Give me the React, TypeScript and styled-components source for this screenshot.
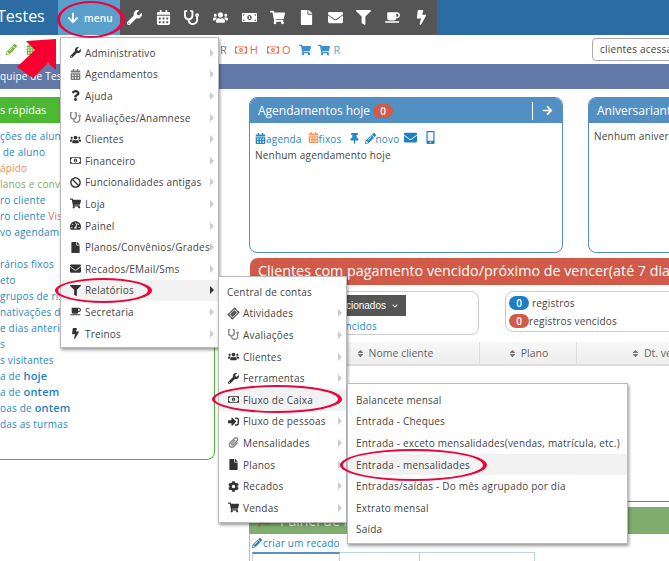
import React from 'react';
import styled, { createGlobalStyle } from 'styled-components';
import {
    FaArrowDown,
    FaArrowRight,
    FaBan,
    FaBolt,
    FaCalendarAlt,
    FaChevronDown,
    FaCoffee,
    FaCog,
    FaEnvelope,
    FaFile,
    FaFilter,
    FaFlag,
    FaMobileAlt,
    FaMoneyBillAlt,
    FaPaperclip,
    FaPencilAlt,
    FaQuestion,
    FaRegMoneyBillAlt,
    FaShoppingCart,
    FaSignInAlt,
    FaSort,
    FaStethoscope,
    FaTachometerAlt,
    FaThumbtack,
    FaTicketAlt,
    FaUsers,
    FaWrench,
} from 'react-icons/fa';

const GlobalStyle = createGlobalStyle`
    html, body {
        margin: 0;
        padding: 0;
        background: #fff;
    }
    * {
        box-sizing: border-box;
    }
`;

const Page = styled.div`
    position: relative;
    width: 669px;
    height: 561px;
    overflow: hidden;
    background: #fff;
    font-family: 'Open Sans', 'Liberation Sans', sans-serif;
    font-size: 10px;
    letter-spacing: 0.2px;
    color: #444;
`;

const Header = styled.header`
    display: flex;
    align-items: stretch;
    height: 35px;
    background: #2d6ca2;
`;

const Brand = styled.div`
    width: 60px;
    margin-left: -3px;
    flex: none;
    font-size: 16px;
    line-height: 32px;
    letter-spacing: 0;
    color: #fff;
    white-space: nowrap;
`;

const MenuButton = styled.div`
    display: flex;
    align-items: center;
    gap: 5px;
    width: 62px;
    margin-left: 1px;
    padding-left: 9px;
    background: #5b9fcd;
    color: #fff;
    font-size: 10px;
    font-weight: 600;
    svg {
        font-size: 12px;
    }
`;

const Toolbar = styled.div`
    display: flex;
    width: 317px;
    background: #555;
    color: #fff;
`;

const ToolbarCell = styled.span`
    display: flex;
    align-items: center;
    justify-content: center;
    width: 28.7px;
    font-size: 15px;
`;

const SubBar = styled.div`
    display: flex;
    align-items: center;
    height: 29px;
`;

const SubIcons = styled.div`
    display: flex;
    align-items: center;
    gap: 9px;
    padding-left: 6px;
    width: 220px;
    font-size: 11px;
`;

const ColorIcon = styled.span<{ $color: string }>`
    display: inline-flex;
    align-items: center;
    gap: 3px;
    color: ${(p) => p.$color};
`;

const ShortcutRow = styled.div`
    display: flex;
    align-items: center;
    font-size: 11px;
    letter-spacing: 0;
`;

const Shortcut = styled(ColorIcon)<{ $space: number }>`
    margin-right: ${(p) => p.$space}px;
    svg {
        font-size: 12px;
    }
`;

const SearchInput = styled.div`
    margin-left: auto;
    width: 100px;
    height: 23px;
    margin-right: -23px;
    border: 1px solid #aaa;
    border-radius: 4px;
    padding-left: 7px;
    line-height: 21px;
    white-space: nowrap;
    color: #444;
`;

const Banner = styled.div`
    height: 25px;
    background: #6379a8;
    color: #fff;
    line-height: 25px;
    white-space: nowrap;
`;

const Main = styled.main`
    display: flex;
    gap: 34px;
    padding-top: 8px;
`;

const Sidebar = styled.aside`
    width: 215px;
    height: 363px;
    flex: none;
    border: 1px solid #4cb833;
    border-left: 0;
    border-radius: 0 0 8px 0;
`;

const SidebarTitle = styled.div`
    height: 26px;
    margin-top: -1px;
    background: #4cb833;
    color: #fff;
    font-size: 11px;
    font-weight: 500;
    line-height: 25px;
    letter-spacing: 0;
`;

const SidebarList = styled.div`
    display: flex;
    flex-direction: column;
    padding-top: 5px;
`;

const SidebarLink = styled.div<{ $color?: string }>`
    height: 16px;
    line-height: 16px;
    white-space: nowrap;
    color: ${(p) => p.$color || '#2a86c4'};
    b {
        font-weight: 600;
        font-size: 11px;
        color: #1d7fc4;
    }
`;

const Accent = styled.span<{ $color: string }>`
    color: ${(p) => p.$color};
`;

const Content = styled.section`
    display: flex;
    flex-direction: column;
    width: 640px;
    flex: none;
`;

const Panels = styled.div`
    display: flex;
    gap: 25px;
`;

const Panel = styled.div`
    width: 314px;
    height: 156px;
    flex: none;
    border: 1px solid #528fc2;
    border-radius: 8px;
    overflow: hidden;
`;

const PanelHeader = styled.div`
    display: flex;
    align-items: center;
    height: 25px;
    padding-left: 8px;
    background: #528fc2;
    color: #fff;
    font-size: 12px;
    letter-spacing: 0;
    white-space: nowrap;
`;

const CountBadge = styled.span<{ $color: string }>`
    display: inline-flex;
    align-items: center;
    justify-content: center;
    width: 20px;
    height: 14px;
    border-radius: 8px;
    background: ${(p) => p.$color};
    color: #fff;
    font-size: 10px;
    font-weight: 600;
    letter-spacing: 0;
`;

const PanelAction = styled.span`
    display: flex;
    align-items: center;
    justify-content: center;
    margin-left: auto;
    width: 30px;
    height: 18px;
    border-left: 1px solid #fff;
    font-size: 11px;
`;

const PanelBody = styled.div<{ $top: number }>`
    padding: ${(p) => p.$top}px 5px 0;
`;

const LinkRow = styled.div`
    display: flex;
    align-items: center;
    height: 17px;
    color: #2a86c4;
`;

const LinkIcon = styled(ColorIcon)<{ $space: number }>`
    gap: 0;
    margin-right: ${(p) => p.$space}px;
    svg {
        font-size: 11px;
    }
`;

const ContactIcon = styled(LinkIcon)`
    margin-bottom: 3px;
    svg {
        font-size: 13px;
    }
`;

const EmptyText = styled.div`
    line-height: 17px;
    white-space: nowrap;
    color: #444;
`;

const DueTitle = styled.div`
    height: 27px;
    margin-top: 5px;
    margin-left: 1px;
    padding-left: 8px;
    border-radius: 8px 8px 0 0;
    background: #d25a48;
    color: #fff;
    font-size: 14.3px;
    line-height: 26px;
    letter-spacing: 0;
    white-space: nowrap;
`;

const FilterRow = styled.div`
    display: flex;
    gap: 26px;
    padding-top: 6px;
    margin-left: 1px;
`;

const SelectionBox = styled.div`
    display: flex;
    flex-direction: column;
    align-items: flex-end;
    width: 229px;
    height: 44px;
    flex: none;
    padding: 3px 72px 0 0;
    border: 1px solid #ccc;
    border-radius: 8px;
`;

const SelectionButton = styled.div`
    display: flex;
    align-items: center;
    gap: 6px;
    height: 21px;
    padding: 0 8px 0 6px;
    background: #555;
    color: #fff;
    font-family: 'Liberation Sans', sans-serif;
    font-size: 10px;
    letter-spacing: 0;
    svg {
        font-size: 6px;
    }
`;

const SelectionLink = styled.div`
    margin: 3px 29px 0 0;
    color: #1d8ad6;
`;

const CountBox = styled.div`
    display: flex;
    flex-direction: column;
    gap: 4px;
    width: 300px;
    height: 41px;
    flex: none;
    padding: 4px 3px 0;
    border: 1px solid #ccc;
    border-radius: 8px;
`;

const CountRow = styled.div<{ $gap: number }>`
    display: flex;
    align-items: center;
    gap: ${(p) => p.$gap}px;
    height: 14px;
    white-space: nowrap;
`;

const TableHead = styled.div`
    display: flex;
    height: 24px;
    margin-top: 7px;
    margin-left: 1px;
    background: linear-gradient(#f7f7f7, #eee);
    border-bottom: 2px solid #ddd;
    color: #666;
    font-size: 10.5px;
    font-weight: 500;
    letter-spacing: 0;
`;

const TableCell = styled.div<{ $width: number }>`
    display: flex;
    align-items: center;
    justify-content: center;
    gap: 4px;
    width: ${(p) => p.$width}px;
    flex: none;
    border-right: 1px solid #ddd;
    white-space: nowrap;
    svg {
        font-size: 9px;
        color: #777;
    }
`;

const TableBody = styled.div`
    height: 136px;
    margin-left: 1px;
    border-bottom: 1px solid #d25a48;
`;

const BoardTitle = styled.div`
    display: flex;
    align-items: center;
    gap: 10px;
    height: 27px;
    margin-top: 5px;
    padding-left: 9px;
    background: #7fae6e;
    color: #fff;
    font-size: 14px;
    letter-spacing: 0;
    white-space: nowrap;
    svg {
        font-size: 12px;
        color: #d25a48;
    }
`;

const Board = styled.div`
    padding-left: 2px;
    border-left: 1px solid #a5c998;
`;

const BoardLink = styled.div`
    display: flex;
    align-items: center;
    gap: 1px;
    height: 18px;
    color: #1d7fc4;
    svg {
        font-size: 10px;
    }
`;

const Tabs = styled.div`
    display: flex;
`;

const Tab = styled.div<{ $width: number; $active?: boolean }>`
    width: ${(p) => p.$width}px;
    height: 40px;
    padding: 7px 0 0 ${(p) => (p.$active ? 13 : 10)}px;
    border: 1px solid #bcd0e0;
    border-left: ${(p) => (p.$active ? '1px solid #bcd0e0' : '0')};
    border-top: ${(p) => (p.$active ? '2px solid #5a8fc0' : '1px solid #bcd0e0')};
    font-size: 11px;
`;

const Flyout = styled.nav<{ $left: number; $top: number; $width: number; $pad?: number }>`
    position: absolute;
    left: ${(p) => p.$left}px;
    top: ${(p) => p.$top}px;
    width: ${(p) => p.$width}px;
    padding: ${(p) => p.$pad ?? 4}px 0 3px;
    background: #fff;
    border: 1px solid #bbb;
    box-shadow: 1px 2px 3px rgba(0, 0, 0, 0.4);
`;

const FlyoutItem = styled.div<{ $active?: boolean }>`
    display: flex;
    align-items: center;
    height: 21.6px;
    padding: 0 4px 0 8px;
    background: ${(p) => (p.$active ? '#f2f2f2' : 'transparent')};
    color: #444;
    white-space: nowrap;
`;

const FlyoutIcon = styled.span<{ $color?: string }>`
    display: flex;
    align-items: center;
    justify-content: center;
    width: 13px;
    margin-right: 3px;
    flex: none;
    font-size: 11px;
    color: ${(p) => p.$color || '#333'};
`;

const FlyoutLabel = styled.span`
    flex: 1;
    min-width: 0;
`;

const Caret = styled.span<{ $active?: boolean }>`
    width: 0;
    height: 0;
    flex: none;
    border-style: solid;
    border-width: 4px 0 4px 4px;
    border-color: transparent transparent transparent ${(p) => (p.$active ? '#333' : '#ccc')};
`;

const TiltedTicket = styled(FaTicketAlt)`
    transform: rotate(-45deg);
`;

const Ring = styled.div<{ $left: number; $top: number; $width: number; $height: number }>`
    position: absolute;
    left: ${(p) => p.$left}px;
    top: ${(p) => p.$top}px;
    width: ${(p) => p.$width}px;
    height: ${(p) => p.$height}px;
    border-style: solid;
    border-color: #e8063c;
    border-width: 2px 4px 2px 3px;
    border-radius: 50%;
    pointer-events: none;
`;

const PointerArrow = styled.svg`
    position: absolute;
    left: 0;
    top: 30px;
    width: 70px;
    height: 60px;
`;

type MenuEntry = {
    label: string;
    icon?: React.ReactNode;
    color?: string;
    active?: boolean;
};

const mainMenu: MenuEntry[] = [
    { label: 'Administrativo', icon: <FaWrench /> },
    { label: 'Agendamentos', icon: <FaCalendarAlt />, color: '#777' },
    { label: 'Ajuda', icon: <FaQuestion /> },
    { label: 'Avaliações/Anamnese', icon: <FaStethoscope />, color: '#888' },
    { label: 'Clientes', icon: <FaUsers /> },
    { label: 'Financeiro', icon: <FaRegMoneyBillAlt /> },
    { label: 'Funcionalidades antigas', icon: <FaBan /> },
    { label: 'Loja', icon: <FaShoppingCart /> },
    { label: 'Painel', icon: <FaTachometerAlt /> },
    { label: 'Planos/Convênios/Grades', icon: <FaFile /> },
    { label: 'Recados/EMail/Sms', icon: <FaEnvelope /> },
    { label: 'Relatórios', icon: <FaFilter />, active: true },
    { label: 'Secretaria', icon: <FaCoffee /> },
    { label: 'Treinos', icon: <FaBolt /> },
];

const reportsMenu: MenuEntry[] = [
    { label: 'Atividades', icon: <TiltedTicket />, color: '#555' },
    { label: 'Avaliações', icon: <FaStethoscope />, color: '#888' },
    { label: 'Clientes', icon: <FaUsers /> },
    { label: 'Ferramentas', icon: <FaWrench /> },
    { label: 'Fluxo de Caixa', icon: <FaRegMoneyBillAlt />, active: true },
    { label: 'Fluxo de pessoas', icon: <FaSignInAlt /> },
    { label: 'Mensalidades', icon: <FaPaperclip />, color: '#888' },
    { label: 'Planos', icon: <FaFile /> },
    { label: 'Recados', icon: <FaCog /> },
    { label: 'Vendas', icon: <FaShoppingCart /> },
];

const cashFlowMenu = [
    'Balancete mensal',
    'Entrada - Cheques',
    'Entrada - exceto mensalidades(vendas, matrícula, etc.)',
    'Entrada - mensalidades',
    'Entradas/saídas - Do mês agrupado por dia',
    'Extrato mensal',
    'Saída',
];

const toolbarIcons = [
    <FaWrench />,
    <FaCalendarAlt />,
    <FaStethoscope />,
    <FaUsers />,
    <FaMoneyBillAlt />,
    <FaShoppingCart />,
    <FaFile />,
    <FaEnvelope />,
    <FaFilter />,
    <FaCoffee />,
    <FaBolt />,
];

const MenuRow = ({ entry }: { entry: MenuEntry }) => (
    <FlyoutItem $active={entry.active}>
        <FlyoutIcon $color={entry.color}>{entry.icon}</FlyoutIcon>
        <FlyoutLabel>{entry.label}</FlyoutLabel>
        <Caret $active={entry.active} />
    </FlyoutItem>
);

export default function App() {
    return (
        <Page>
            <GlobalStyle />
            <Header>
                <Brand>Testes</Brand>
                <MenuButton>
                    <FaArrowDown />
                    menu
                </MenuButton>
                <Toolbar>
                    {toolbarIcons.map((icon, i) => (
                        <ToolbarCell key={i}>{icon}</ToolbarCell>
                    ))}
                </Toolbar>
            </Header>

            <SubBar>
                <SubIcons>
                    <ColorIcon $color="#7cb342">
                        <FaPencilAlt />
                    </ColorIcon>
                    <ColorIcon $color="#7cb342">
                        <FaCalendarAlt />
                    </ColorIcon>
                </SubIcons>
                <ShortcutRow>
                    <Shortcut $color="#777" $space={8}>R</Shortcut>
                    <Shortcut $color="#e8664a" $space={9}>
                        <FaRegMoneyBillAlt />H
                    </Shortcut>
                    <Shortcut $color="#e8664a" $space={9}>
                        <FaRegMoneyBillAlt />O
                    </Shortcut>
                    <Shortcut $color="#3d8fd1" $space={7}>
                        <FaShoppingCart />
                    </Shortcut>
                    <Shortcut $color="#3d8fd1" $space={0}>
                        <FaShoppingCart />
                        <Accent $color="#6a9fd0">R</Accent>
                    </Shortcut>
                </ShortcutRow>
                <SearchInput>clientes acessados</SearchInput>
            </SubBar>

            <Banner>quipe de Testes</Banner>

            <Main>
                <Sidebar>
                    <SidebarTitle>s rápidas</SidebarTitle>
                    <SidebarList>
                        <SidebarLink>ções de aluno</SidebarLink>
                        <SidebarLink>&nbsp;de aluno</SidebarLink>
                        <SidebarLink $color="#f58a4f">ápido</SidebarLink>
                        <SidebarLink $color="#7fa96b">lanos e conv</SidebarLink>
                        <SidebarLink>ro cliente</SidebarLink>
                        <SidebarLink>
                            ro cliente <Accent $color="#d9705e">Visi</Accent>
                        </SidebarLink>
                        <SidebarLink>vo agendame</SidebarLink>
                        <SidebarLink />
                        <SidebarLink>rários fixos</SidebarLink>
                        <SidebarLink>eto</SidebarLink>
                        <SidebarLink>grupos de ris</SidebarLink>
                        <SidebarLink>nativações di</SidebarLink>
                        <SidebarLink>e dias anteri</SidebarLink>
                        <SidebarLink>s</SidebarLink>
                        <SidebarLink>s visitantes</SidebarLink>
                        <SidebarLink>
                            a de <b>hoje</b>
                        </SidebarLink>
                        <SidebarLink>
                            a de <b>ontem</b>
                        </SidebarLink>
                        <SidebarLink>
                            oas de <b>ontem</b>
                        </SidebarLink>
                        <SidebarLink>das as turmas</SidebarLink>
                    </SidebarList>
                </Sidebar>

                <Content>
                    <Panels>
                        <Panel>
                            <PanelHeader>
                                Agendamentos hoje&nbsp;
                                <CountBadge $color="#d25a48">0</CountBadge>
                                <PanelAction>
                                    <FaArrowRight />
                                </PanelAction>
                            </PanelHeader>
                            <PanelBody $top={7}>
                                <LinkRow>
                                    <LinkIcon $color="#2a86c4" $space={6}>
                                        <FaCalendarAlt />
                                        agenda
                                    </LinkIcon>
                                    <LinkIcon $color="#2a86c4" $space={7}>
                                        <Accent $color="#f5995e">
                                            <FaCalendarAlt />
                                        </Accent>
                                        fixos
                                    </LinkIcon>
                                    <LinkIcon $color="#2a86c4" $space={5}>
                                        <FaThumbtack />
                                    </LinkIcon>
                                    <LinkIcon $color="#2a86c4" $space={5}>
                                        <FaPencilAlt />
                                        novo
                                    </LinkIcon>
                                    <ContactIcon $color="#1d7fc4" $space={7}>
                                        <FaEnvelope />
                                    </ContactIcon>
                                    <ContactIcon $color="#1d7fc4" $space={0}>
                                        <FaMobileAlt />
                                    </ContactIcon>
                                </LinkRow>
                                <EmptyText>Nenhum agendamento hoje</EmptyText>
                            </PanelBody>
                        </Panel>
                        <Panel>
                            <PanelHeader>Aniversariantes</PanelHeader>
                            <PanelBody $top={5}>
                                <EmptyText>Nenhum aniversariante</EmptyText>
                            </PanelBody>
                        </Panel>
                    </Panels>

                    <DueTitle>Clientes com pagamento vencido/próximo de vencer(até 7 dias)</DueTitle>
                    <FilterRow>
                        <SelectionBox>
                            <SelectionButton>
                                Selecionados
                                <FaChevronDown />
                            </SelectionButton>
                            <SelectionLink>Vencidos</SelectionLink>
                        </SelectionBox>
                        <CountBox>
                            <CountRow $gap={3}>
                                <CountBadge $color="#1f7fc4">0</CountBadge>
                                registros
                            </CountRow>
                            <CountRow $gap={0}>
                                <CountBadge $color="#d25a48">0</CountBadge>
                                registros vencidos
                            </CountRow>
                        </CountBox>
                    </FilterRow>
                    <TableHead>
                        <TableCell $width={60} />
                        <TableCell $width={170}>
                            <FaSort />
                            Nome cliente
                        </TableCell>
                        <TableCell $width={97}>
                            <FaSort />
                            Plano
                        </TableCell>
                        <TableCell $width={196}>
                            <FaSort />
                            Dt. vencimento
                        </TableCell>
                    </TableHead>
                    <TableBody />

                    <BoardTitle>
                        <FaFlag />
                        Painel de recados
                    </BoardTitle>
                    <Board>
                        <BoardLink>
                            <FaPencilAlt />
                            criar um recado
                        </BoardLink>
                        <Tabs>
                            <Tab $width={88} $active>
                                <Accent $color="#f0a030">
                                    <FaUsers />
                                </Accent>
                            </Tab>
                            <Tab $width={80}>
                                <Accent $color="#528fc2">
                                    <FaUsers />
                                </Accent>
                            </Tab>
                            <Tab $width={115}>
                                <Accent $color="#528fc2">
                                    <FaUsers />
                                </Accent>
                            </Tab>
                        </Tabs>
                    </Board>
                </Content>
            </Main>

            <Flyout $left={60} $top={37} $width={159}>
                {mainMenu.map((entry) => (
                    <MenuRow key={entry.label} entry={entry} />
                ))}
            </Flyout>

            <Flyout $left={218} $top={276} $width={129}>
                <FlyoutItem>Central de contas</FlyoutItem>
                {reportsMenu.map((entry) => (
                    <MenuRow key={entry.label} entry={entry} />
                ))}
            </Flyout>

            <Flyout $left={347} $top={383} $width={281} $pad={5}>
                {cashFlowMenu.map((label) => (
                    <FlyoutItem key={label} $active={label === 'Entrada - mensalidades'}>
                        {label}
                    </FlyoutItem>
                ))}
            </Flyout>

            <PointerArrow viewBox="0 0 70 60">
                <polygon points="56,9 26,11 35,20 17,37 33,48 48,33 56,40" fill="#f5002f" />
            </PointerArrow>
            <Ring $left={57} $top={1} $width={68} $height={37} />
            <Ring $left={55} $top={278} $width={97} $height={25} />
            <Ring $left={212} $top={385} $width={130} $height={28} />
            <Ring $left={340} $top={449} $width={147} $height={32} />
        </Page>
    );
}
